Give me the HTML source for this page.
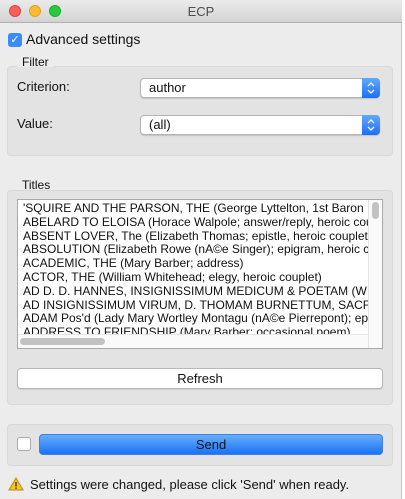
<!DOCTYPE html>
<html><head><style>
*{box-sizing:border-box;margin:0;padding:0}
body{width:405px;height:499px;background:#fff;font-family:"Liberation Sans",sans-serif;font-size:13px;color:#111;position:relative;overflow:hidden}
.win{position:absolute;left:0;top:0;width:402px;height:499px;background:#ececec;border-right:1px solid #c8c8c8}
.tb{position:absolute;left:0;top:0;width:402px;height:23px;background:linear-gradient(#ebebeb,#d3d3d3);border-bottom:1px solid #b0b0b0;text-align:center;line-height:23px;color:#4d4d4d;font-size:13px}
.dot{position:absolute;top:5px;width:12px;height:12px;border-radius:50%}
.a{position:absolute}
.grp{position:absolute;background:#e3e3e3;border:1px solid #d9d9d9;border-radius:4px}
.combo{position:absolute;left:140px;width:240px;height:20px;background:#fff;border:1px solid #b5b5b5;border-radius:4px;box-shadow:0 1px 1px rgba(0,0,0,.15);padding-left:8px;line-height:18px;font-size:13px}
.combo svg{position:absolute;right:-1px;top:-1px}
.list{position:absolute;left:17px;top:199px;width:366px;height:150px;background:#fff;border:1px solid #a9a9a9;overflow:hidden}
.list div{white-space:nowrap;font-size:12px;line-height:13.8px;padding-left:5px}
</style></head><body>
<div class="win">
<div class="tb">ECP
<div class="dot" style="left:9px;background:#fc5f57;border:1px solid #e0443e"></div>
<div class="dot" style="left:29px;background:#fdbc2e;border:1px solid #dea123"></div>
<div class="dot" style="left:49px;background:#29c840;border:1px solid #1dad2b"></div>
</div>
<div class="a" style="left:8px;top:33px;width:14px;height:14px;background:#3a8cf8;border-radius:3px;color:#fff;font-size:11px;line-height:14px;text-align:center">✓</div>
<div class="a" style="left:26px;top:31px;font-size:14px">Advanced settings</div>
<div class="grp" style="left:7px;top:66px;width:386px;height:90px"></div>
<div class="a" style="left:17px;top:55px;background:#ececec;padding:0 5px 0 5px;font-size:12px;height:12px;line-height:15px">Filter</div>
<div class="a" style="left:17px;top:79px">Criterion:</div>
<div class="combo" style="top:78px">author<svg width="18" height="20" viewBox="0 0 18 20"><defs><linearGradient id="g" x1="0" y1="0" x2="0" y2="1"><stop offset="0" stop-color="#62a9fc"/><stop offset="1" stop-color="#1b6ff5"/></linearGradient></defs><path d="M0 0H14A4 4 0 0 1 18 4V16A4 4 0 0 1 14 20H0Z" fill="url(#g)"/><path d="M6 8L9 5L12 8M6 12L9 15L12 12" fill="none" stroke="#fff" stroke-width="1.3"/></svg></div>
<div class="a" style="left:17px;top:116px">Value:</div>
<div class="combo" style="top:115px">(all)<svg width="18" height="20" viewBox="0 0 18 20"><path d="M0 0H14A4 4 0 0 1 18 4V16A4 4 0 0 1 14 20H0Z" fill="url(#g)"/><path d="M6 8L9 5L12 8M6 12L9 15L12 12" fill="none" stroke="#fff" stroke-width="1.3"/></svg></div>
<div class="grp" style="left:7px;top:190px;width:386px;height:215px"></div>
<div class="a" style="left:17px;top:178px;background:#ececec;padding:0 5px;font-size:12px;height:12px;line-height:15px">Titles</div>
<div class="list">
<div style="padding-top:2px">'SQUIRE AND THE PARSON, THE (George Lyttelton, 1st Baron</div>
<div>ABELARD TO ELOISA (Horace Walpole; answer/reply, heroic cou</div>
<div>ABSENT LOVER, The (Elizabeth Thomas; epistle, heroic couplet</div>
<div>ABSOLUTION (Elizabeth Rowe (nA©e Singer); epigram, heroic c</div>
<div>ACADEMIC, THE (Mary Barber; address)</div>
<div>ACTOR, THE (William Whitehead; elegy, heroic couplet)</div>
<div>AD D. D. HANNES, INSIGNISSIMUM MEDICUM &amp; POETAM (W</div>
<div>AD INSIGNISSIMUM VIRUM, D. THOMAM BURNETTUM, SACF</div>
<div>ADAM Pos'd (Lady Mary Wortley Montagu (nA©e Pierrepont); ep</div>
<div>ADDRESS TO FRIENDSHIP (Mary Barber; occasional poem)</div>
<div class="a" style="left:0;top:134px;width:350px;height:15px;background:#fafafa;border-top:1px solid #e5e5e5;padding:0"></div>
<div class="a" style="left:350px;top:0;width:15px;height:149px;background:#fafafa;border-left:1px solid #e5e5e5;padding:0"></div>
<div class="a" style="left:2px;top:138px;width:85px;height:7px;background:#c2c2c2;border-radius:4px;padding:0"></div>
<div class="a" style="left:354px;top:2px;width:7px;height:17px;background:#c2c2c2;border-radius:4px;padding:0"></div>
</div>
<div class="a" style="left:17px;top:368px;width:366px;height:21px;background:#fff;border:1px solid #b8b8b8;border-radius:4px;text-align:center;line-height:19px;box-shadow:0 1px 1px rgba(0,0,0,.1)">Refresh</div>
<div class="grp" style="left:7px;top:424px;width:386px;height:42px"></div>
<div class="a" style="left:17px;top:437px;width:14px;height:14px;background:#fff;border:1px solid #aaa;border-radius:3px"></div>
<div class="a" style="left:39px;top:434px;width:344px;height:21px;background:linear-gradient(#68aefc,#1a72f6);border:1px solid #3f80e0;border-radius:4px;text-align:center;line-height:19px">Send</div>
<svg class="a" style="left:8px;top:477px" width="16" height="14" viewBox="0 0 16 14"><path d="M8 1L15 13H1Z" fill="#f6c624" stroke="#b08a10" stroke-width="1"/><rect x="7.3" y="5" width="1.4" height="4.5" fill="#333"/><rect x="7.3" y="10.5" width="1.4" height="1.4" fill="#333"/></svg>
<div class="a" style="left:30px;top:477px">Settings were changed, please click 'Send' when ready.</div>
</div>
</body></html>
